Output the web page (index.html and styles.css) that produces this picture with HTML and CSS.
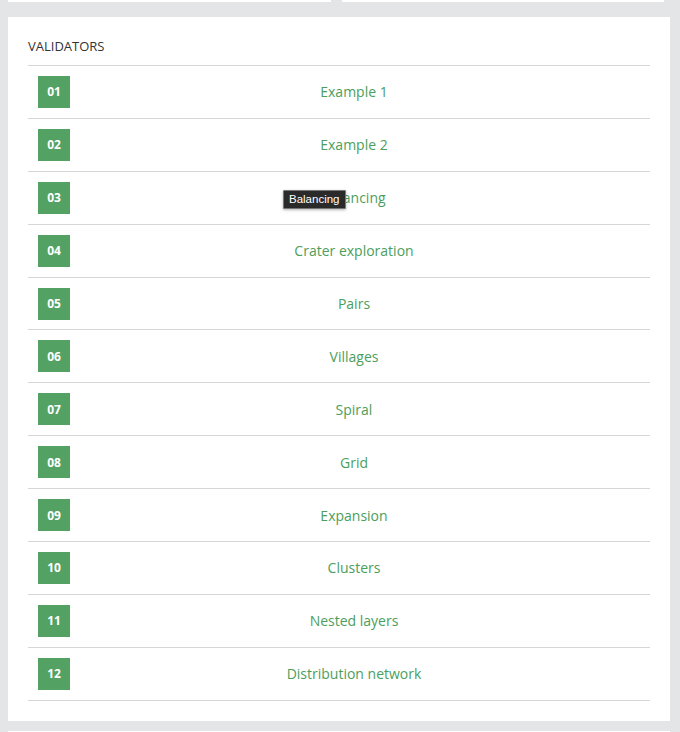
FILE: index.html
```html
<!DOCTYPE html>
<html>
<head>
<meta charset="utf-8">
<link rel="stylesheet" href="styles.css">
</head>
<body>
<div class="top-row">
  <div class="top-card"></div>
  <div class="top-card"></div>
</div>
<section class="card">
  <h2 class="card-title">VALIDATORS</h2>
  <ul class="list">
    <li class="row"><span class="badge">01</span><a class="label">Example 1</a></li>
    <li class="row"><span class="badge">02</span><a class="label">Example 2</a></li>
    <li class="row"><span class="badge">03</span><a class="label">Balancing</a><span class="tooltip">Balancing</span></li>
    <li class="row"><span class="badge">04</span><a class="label">Crater exploration</a></li>
    <li class="row"><span class="badge">05</span><a class="label">Pairs</a></li>
    <li class="row"><span class="badge">06</span><a class="label">Villages</a></li>
    <li class="row"><span class="badge">07</span><a class="label">Spiral</a></li>
    <li class="row"><span class="badge">08</span><a class="label">Grid</a></li>
    <li class="row"><span class="badge">09</span><a class="label">Expansion</a></li>
    <li class="row"><span class="badge">10</span><a class="label">Clusters</a></li>
    <li class="row"><span class="badge">11</span><a class="label">Nested layers</a></li>
    <li class="row"><span class="badge">12</span><a class="label">Distribution network</a></li>
  </ul>
</section>
<section class="card next-card"></section>
</body>
</html>
```
FILE: styles.css
```css
html, body {
  margin: 0;
  padding: 0;
  background: #e4e5e7;
  font-family: "Open Sans", "Liberation Sans", sans-serif;
  overflow: hidden;
}
body {
  padding: 0 10px 0 8px;
}
.top-row {
  display: grid;
  grid-template-columns: 1fr 1fr;
  column-gap: 11px;
  width: 656px;
  height: 2px;
}
.top-card {
  background: #fff;
}
.card {
  background: #fff;
  margin-top: 15px;
  padding: 20px 20px 20px 20px;
}
.card-title {
  margin: 0 0 10px 0;
  font-size: 13px;
  font-weight: 400;
  line-height: 18px;
  color: #333;
}
.list {
  list-style: none;
  margin: 0;
  padding: 0;
  border-bottom: 1px solid #d6d6d6;
}
.row {
  position: relative;
  display: flex;
  align-items: center;
  height: 51.9px;
  border-top: 1px solid #d6d6d6;
}
.badge {
  width: 32px;
  height: 32px;
  margin-left: 10px;
  background: #53a264;
  color: #fff;
  font-size: 12px;
  font-weight: 700;
  display: flex;
  align-items: center;
  justify-content: center;
}
.label {
  flex: 1;
  text-align: center;
  padding-right: 12px;
  font-size: 14px;
  color: #4c9e5c;
}
.tooltip {
  position: absolute;
  left: 255px;
  top: 18px;
  background: #2a2a2a;
  border: 1px solid #777;
  border-radius: 1px;
  color: #fff;
  font-family: "Liberation Sans", Arial, sans-serif;
  font-size: 11.5px;
  line-height: 17px;
  padding: 0 5px;
  box-shadow: 0 1px 3px rgba(0,0,0,0.3);
}
.next-card {
  margin-top: 10px;
  height: 40px;
  padding: 0;
}
```
